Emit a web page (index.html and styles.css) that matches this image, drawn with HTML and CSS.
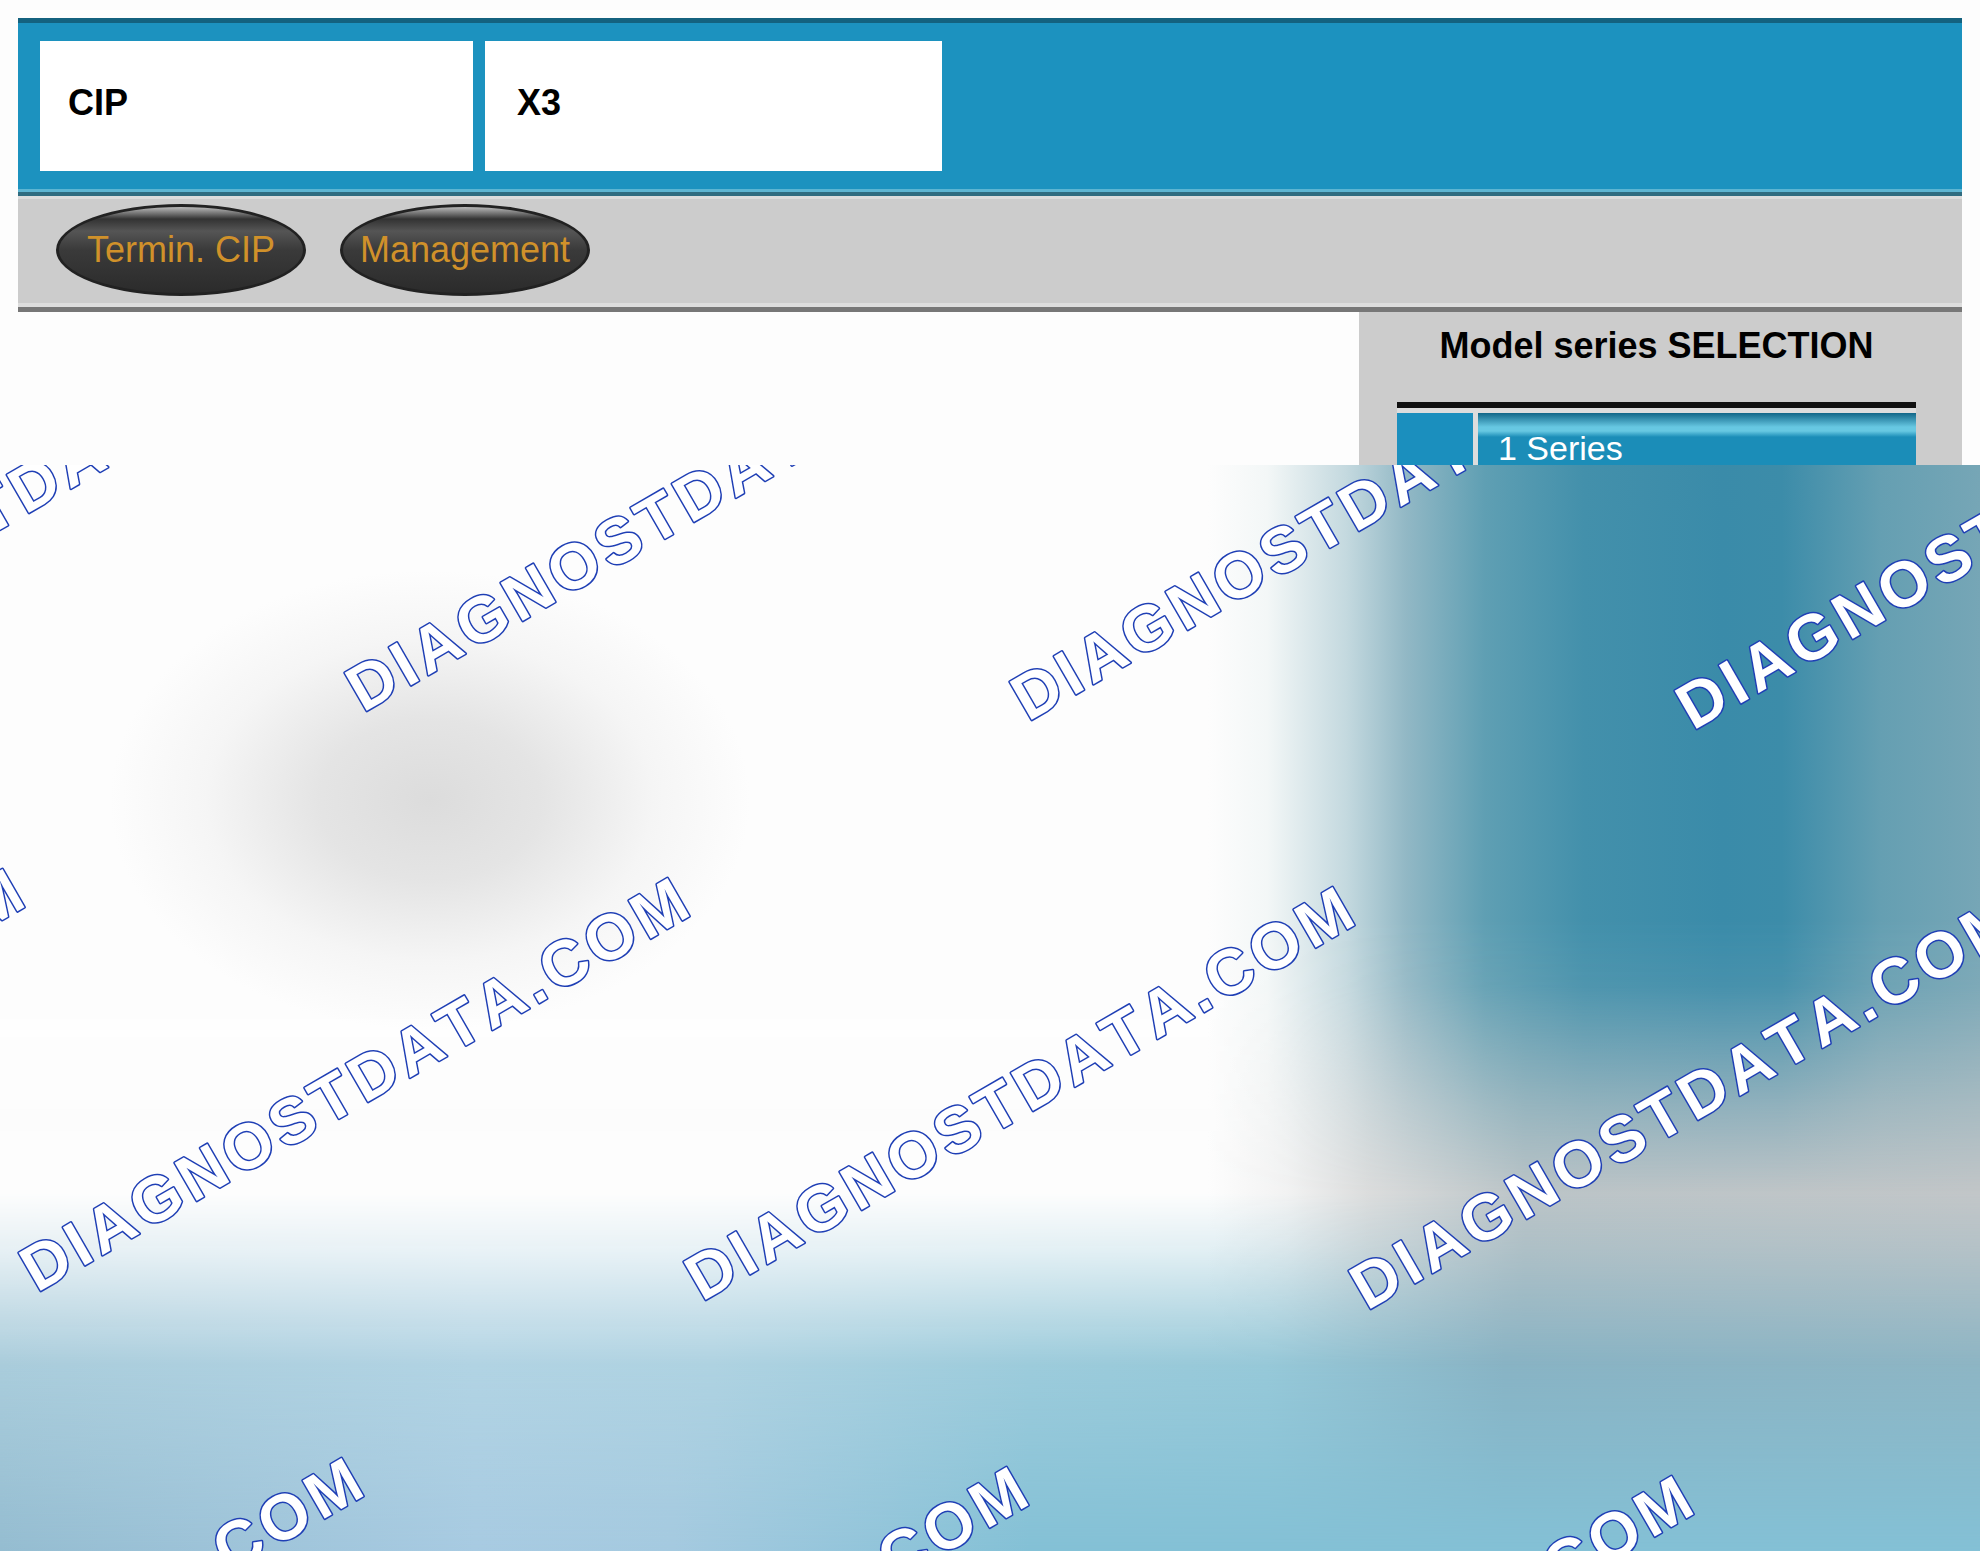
FILE: index.html
```
<!DOCTYPE html>
<html lang="en">
<head>
	<meta charset="UTF-8">
	<title>CIP - Model series</title>
	<link rel="stylesheet" href="styles.css">
</head>
<body>
	<div id="screen">
		<header class="info-bar">
			<div class="info-box">CIP</div>
			<div class="info-box wide">X3</div>
		</header>
		<nav class="tool-bar">
			<button type="button">Termin. CIP</button>
			<button type="button">Management</button>
		</nav>
		<main>
			<section class="selection">
				<h1>Model series SELECTION</h1>
				<ul class="series">
					<li><span class="mark"></span><a href="#">1 Series</a></li>
				</ul>
			</section>
		</main>
	</div>
	<div id="cover">
		<div class="layer bottom"></div>
		<div class="layer low"></div>
		<div class="layer middle"></div>
		<div class="layer top"></div>
		<div class="layer spot"></div>
		<svg class="layer watermark">
			<text transform="translate(-302 239) rotate(-30)">DIAGNOSTDATA.COM</text>
			<text transform="translate(363 248) rotate(-30)">DIAGNOSTDATA.COM</text>
			<text transform="translate(1028 257) rotate(-30)">DIAGNOSTDATA.COM</text>
			<text transform="translate(1693 266) rotate(-30)">DIAGNOSTDATA.COM</text>
			<text transform="translate(-628 819) rotate(-30)">DIAGNOSTDATA.COM</text>
			<text transform="translate(37 828) rotate(-30)">DIAGNOSTDATA.COM</text>
			<text transform="translate(702 837) rotate(-30)">DIAGNOSTDATA.COM</text>
			<text transform="translate(1367 846) rotate(-30)">DIAGNOSTDATA.COM</text>
			<text transform="translate(-289 1408) rotate(-30)">DIAGNOSTDATA.COM</text>
			<text transform="translate(376 1417) rotate(-30)">DIAGNOSTDATA.COM</text>
			<text transform="translate(1041 1426) rotate(-30)">DIAGNOSTDATA.COM</text>
		</svg>
	</div>
</body>
</html>
```

FILE: styles.css
```
*{
	margin: 0;
	padding: 0;
	box-sizing: border-box;
}
body{
	display: flex;
	flex-direction: column;
	min-height: 100vh;
	background-color: #fdfdfd;
	font-family: "Liberation Sans", Arial, sans-serif;
	overflow-x: hidden;
}
#screen{
	padding: 18px 18px 0;
}
.info-bar{
	display: flex;
	gap: 12px;
	height: 178px;
	padding: 18px 22px 20px;
	border-top: 5px solid #14627f;
	border-bottom: 4px solid #2f6c80;
	background: linear-gradient(#1c92bf 98%, #5db5d2 98%);
}
.info-box{
	width: 433px;
	height: 130px;
	padding: 0 28px;
	background-color: #fff;
	font-size: 36px;
	font-weight: bold;
	line-height: 124px;
}
.info-box.wide{
	width: 457px;
	padding: 0 32px;
}
.tool-bar{
	display: flex;
	gap: 34px;
	height: 116px;
	padding: 5px 38px;
	border-top: 3px solid #dcdcdc;
	border-bottom: 5px solid #777;
	background: linear-gradient(#ccc 96%, #ddd 96%);
}
.tool-bar button{
	width: 250px;
	height: 92px;
	border: 3px solid #222;
	border-radius: 50%;
	background: linear-gradient(#bbb 0, #333 14%, #555 28%, #3a3a3a 50%, #2b2b2b 100%);
	color: #d0912a;
	font-family: inherit;
	font-size: 36px;
	white-space: nowrap;
}
main{
	display: flex;
	justify-content: flex-end;
}
.selection{
	width: 603px;
	padding: 12px 46px 0 38px;
	background-color: #ccc;
}
.selection h1{
	height: 78px;
	font-size: 36px;
	line-height: 44px;
	text-align: center;
}
.series{
	list-style: none;
	border-top: 6px solid #111;
}
.series li{
	display: flex;
	gap: 5px;
	height: 57px;
	padding-top: 5px;
	background-color: #ddd;
}
.mark{
	width: 76px;
	background-color: #1b8fbe;
}
.series a{
	flex: 1;
	padding: 15px 20px 0;
	background: linear-gradient(#168 0, #67c8e2 14px, #67c8e2 18px, #1b8db8 24px);
	color: #fff;
	font-size: 34px;
	line-height: 40px;
	text-decoration: none;
}

/* blurred cover with the watermark */
#cover{
	display: grid;
	flex: 1;
	overflow: hidden;
}
.layer{
	grid-area: 1 / 1;
	width: 100%;
	height: 100%;
}
.bottom{
	background: linear-gradient(90deg, #95bdd1, #a8cbe2 24%, #a5cae0 34%, #84c1d6 52%, #84c1d6);
}
.low{
	background: linear-gradient(90deg, #a9ccdb, #b1d3e3 24%, #aed2e1 36%, #9ccbdb 52%, #96c8d8 64%, #88b3c4 76%, #8db5c4);
	mask-image: linear-gradient(#000 83%, transparent);
}
.middle{
	background: linear-gradient(90deg, #fdfdfd 61%, #f2f2f2 65%, #dcdddd 69%, #bbc4c7 77%, #c2c6c8);
	mask-image: linear-gradient(#000 67%, rgba(0,0,0,.75) 72%, transparent 83%);
}
.top{
	background: linear-gradient(90deg, #fdfdfd 61%, #f3f7f7 64%, #c4d9df 68%, #92b8c5 71%, #5f9fb3 75%, #4390ab 80%, #3a8ba9 87%, #3c8ca9 90%, #659fb2 95%, #76a6b6);
	mask-image: linear-gradient(#000 42%, rgba(0,0,0,.9) 48%, rgba(0,0,0,.35) 59%, transparent 67%);
}
.spot{
	z-index: 1;
	background: radial-gradient(320px 230px at 430px 335px, #dcdcdc, rgba(224,224,224,.85) 35%, rgba(240,240,240,.6) 70%, rgba(253,253,253,0));
}
.watermark{
	z-index: 2;
	overflow: hidden;
	fill: #fff;
	stroke: #1f3fb5;
	stroke-width: 3px;
	stroke-linejoin: round;
	paint-order: stroke;
	font-size: 64px;
	font-weight: bold;
	font-kerning: none;
	letter-spacing: 5px;
}
```
